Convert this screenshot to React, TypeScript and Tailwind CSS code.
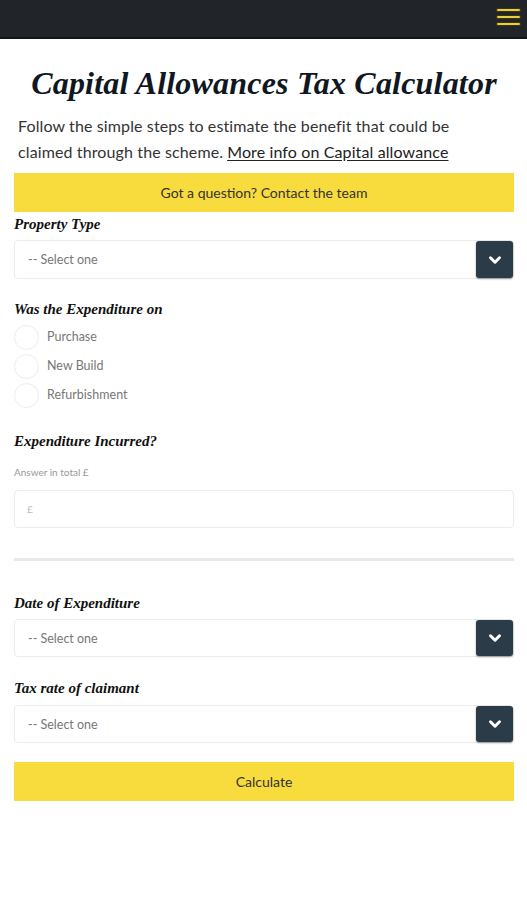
import { ChevronDown } from 'lucide-react';

const serif = "font-['Liberation_Serif','Times_New_Roman',serif]";
const sans = "font-['Lato','Open_Sans',sans-serif]";

function Label({ text, className = '' }: { text: string; className?: string }) {
  return (
    <div className={`${serif} text-[15px] leading-[18px] font-bold italic text-[#111] ${className}`}>
      {text}
    </div>
  );
}

function SelectBox({ className = '' }: { className?: string }) {
  return (
    <div className={`flex items-stretch rounded-[4px] border border-[#ececec] bg-white ${className}`}>
      <div className={`flex flex-1 items-center pl-[13px] pt-[2px] ${sans} text-[12.5px] text-[#777]`}>-- Select one</div>
      <div className="flex w-[37px] items-center justify-center rounded-[3px] bg-[#2c3b48] shadow-[0_1px_2px_rgba(0,0,0,0.4)]">
        <ChevronDown size={18} strokeWidth={4} className="text-white" />
      </div>
    </div>
  );
}

function Radio({ label }: { label: string }) {
  return (
    <div className="flex h-[29px] items-center">
      <div className="h-[25px] w-[25px] rounded-full border border-[#ededed] bg-white" />
      <span className={`ml-[8px] ${sans} text-[12.5px] text-[#777]`}>{label}</span>
    </div>
  );
}

export default function App() {
  return (
    <div className="min-h-[900px] bg-white">
      {/* Top bar */}
      <div className="flex h-[39px] items-center justify-end border-b-2 border-[#131517] bg-[#212529] pr-[6px]">
        <div className="flex flex-col gap-[3px] pb-[3px]">
          {[0, 1, 2].map(i => (
            <div key={i} className="h-[4px] w-[25px] rounded-[2px] border border-[#3a3510] bg-[#e8cd3c]" />
          ))}
        </div>
      </div>

      <div className="pl-[14px] pr-[13px]">
        <h1 className={`mt-[26px] text-center ${serif} text-[32px] leading-[36px] font-bold italic tracking-[0.2px] text-[#0f1722]`}>
          Capital Allowances Tax Calculator
        </h1>

        <div className={`mt-[12px] pl-[4px] ${sans} text-[16px] leading-[26px] tracking-[0.12px] text-[#333]`}>
          <div>Follow the simple steps to estimate the benefit that could be</div>
          <div className="flex gap-[4px]">
            <span>claimed through the scheme.</span>
            <a className="text-[#222] underline underline-offset-2">More info on Capital allowance</a>
          </div>
        </div>

        <div className={`mt-[8px] flex h-[39px] items-center justify-center bg-[#f8dc3d] ${sans} text-[14px] text-[#333]`}>
          Got a question? Contact the team
        </div>

        <Label text="Property Type" className="mt-[3px]" />
        <SelectBox className="mt-[7px] h-[39px]" />

        <Label text="Was the Expenditure on" className="mt-[21px]" />
        <div className="mt-[5px] flex flex-col">
          <Radio label="Purchase" />
          <Radio label="New Build" />
          <Radio label="Refurbishment" />
        </div>

        <Label text="Expenditure Incurred?" className="mt-[22px]" />
        <div className={`mt-[16px] ${sans} text-[10px] leading-[12px] text-[#999]`}>Answer in total £</div>
        <div className={`mt-[12px] flex h-[38px] items-center rounded-[4px] border border-[#ececec] pl-[12px] ${sans} text-[10px] text-[#bbb]`}>
          £
        </div>

        <div className="mt-[30px] h-[3px] bg-[#e9e9e9]" />

        <Label text="Date of Expenditure" className="mt-[33px]" />
        <SelectBox className="mt-[7px] h-[38px]" />

        <Label text="Tax rate of claimant" className="mt-[22px]" />
        <SelectBox className="mt-[8px] h-[38px]" />

        <div className={`mt-[19px] flex h-[39px] items-center justify-center bg-[#f8dc3d] ${sans} text-[14px] text-[#333]`}>
          Calculate
        </div>
      </div>
    </div>
  );
}
